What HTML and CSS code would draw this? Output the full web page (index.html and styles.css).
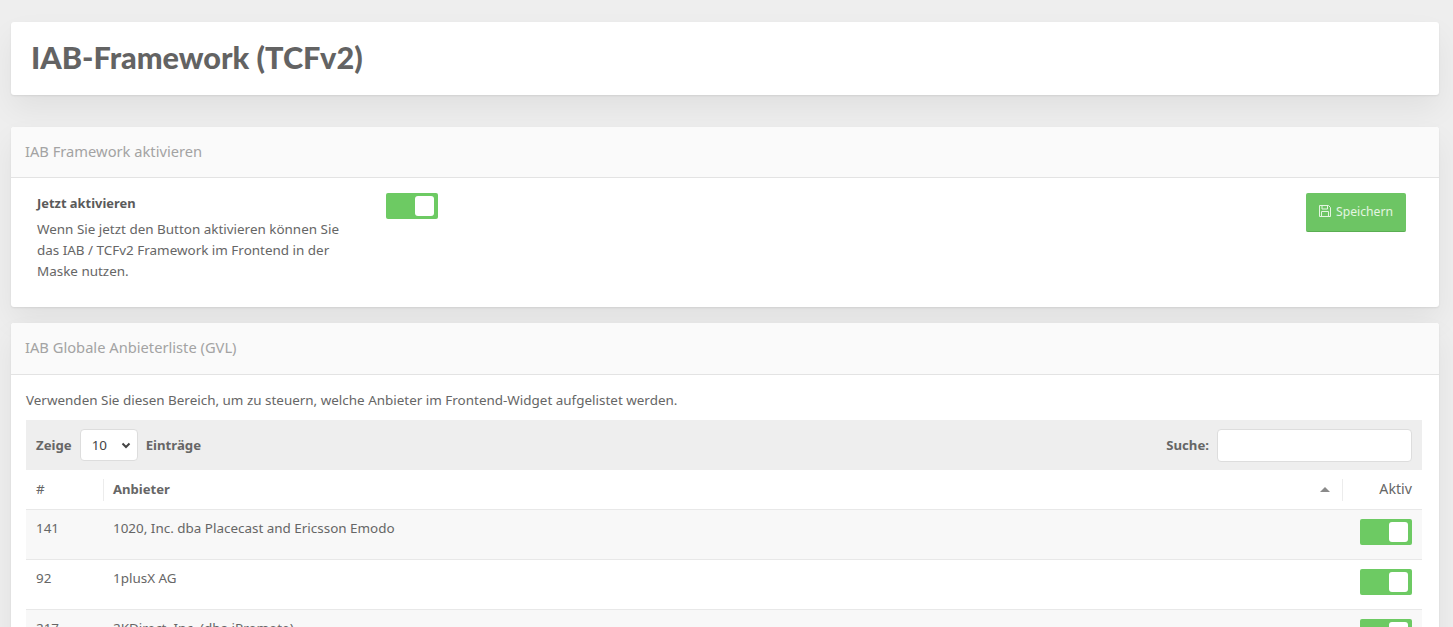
FILE: index.html
```html
<!DOCTYPE html>
<html lang="de">
<head>
    <meta charset="UTF-8">
    <meta name="viewport" content="width=device-width, initial-scale=1.0">
    <title>IAB-Framework (TCFv2)</title>
    <link rel="stylesheet" href="styles.css">
</head>
<body>
    <div class="page">
        <div class="card title-card">
            <h1>IAB-Framework (TCFv2)</h1>
        </div>

        <div class="card activate-card">
            <div class="card-header">IAB Framework aktivieren</div>
            <div class="activate-body">
                <div class="activate-text">
                    <strong>Jetzt aktivieren</strong>
                    <p>Wenn Sie jetzt den Button aktivieren können Sie das IAB / TCFv2 Framework im Frontend in der Maske nutzen.</p>
                </div>
                <span class="switch"><span class="knob"></span></span>
                <button class="save-btn">
                    <svg width="12" height="12" viewBox="0 0 12 12" fill="none" stroke="currentColor" stroke-width="1">
                        <path d="M.5.5h9l2 2v9H.5z"/>
                        <path d="M3 .5v3.5h5.5V.5"/>
                        <path d="M2.5 11.5V6.5h7v5"/>
                    </svg>
                    Speichern
                </button>
            </div>
        </div>

        <div class="card list-card">
            <div class="card-header list-header">IAB Globale Anbieterliste (GVL)</div>
            <div class="list-body">
                <p class="intro">Verwenden Sie diesen Bereich, um zu steuern, welche Anbieter im Frontend-Widget aufgelistet werden.</p>
                <div class="toolbar">
                    <label class="toolbar-group">Zeige
                        <span class="fake-select">10
                            <svg width="10" height="7" viewBox="0 0 10 7" fill="none" stroke="#444" stroke-width="2"><path d="M1.5 1.5 5 5l3.5-3.5"/></svg>
                        </span>
                        Einträge</label>
                    <label class="toolbar-group">Suche: <input type="text" class="search"></label>
                </div>
                <table class="vendors">
                    <thead>
                        <tr>
                            <th class="col-id"><span>#</span></th>
                            <th class="col-name"><span>Anbieter</span><i class="sort-up"></i></th>
                            <th class="col-active"><span>Aktiv</span></th>
                        </tr>
                    </thead>
                    <tbody>
                        <tr>
                            <td>141</td>
                            <td>1020, Inc. dba Placecast and Ericsson Emodo</td>
                            <td class="cell-switch"><span class="switch"><span class="knob"></span></span></td>
                        </tr>
                        <tr>
                            <td>92</td>
                            <td>1plusX AG</td>
                            <td class="cell-switch"><span class="switch"><span class="knob"></span></span></td>
                        </tr>
                        <tr>
                            <td>217</td>
                            <td>2KDirect, Inc. (dba iPromote)</td>
                            <td class="cell-switch"><span class="switch"><span class="knob"></span></span></td>
                        </tr>
                    </tbody>
                </table>
            </div>
        </div>
    </div>
</body>
</html>
```

FILE: styles.css
```css
html, body {
    height: 100%;
    overflow: hidden;
}
body {
    margin: 0;
    font-family: "Noto Sans", Arial, sans-serif;
    font-size: 13.45px;
    color: #666;
    background-color: #eeeeee;
}
.page {
    padding: 22px 14px 0 11px;
}
.card {
    background: #fff;
    border-radius: 3px;
    box-shadow: 0 1px 2px rgba(0, 0, 0, 0.08), 0 14px 30px rgba(0, 0, 0, 0.06);
}
.title-card {
    height: 73px;
    display: flex;
    align-items: center;
    padding: 0 0 2px 20px;
    box-sizing: border-box;
    margin-bottom: 32px;
}
h1 {
    margin: 0;
    font-family: "Lato", sans-serif;
    font-size: 30.65px;
    font-weight: 900;
    color: #636363;
}
.card-header {
    height: 50px;
    line-height: 48px;
    padding-left: 14px;
    font-size: 14.7px;
    color: #a3a3a3;
    background: #fafafa;
    border-bottom: 1px solid #e3e3e3;
    border-radius: 3px 3px 0 0;
}
.list-header {
    height: 51px;
}
.activate-card {
    margin-bottom: 16px;
}
.activate-body {
    display: flex;
    align-items: flex-start;
    height: 129px;
    padding: 15px 33px 0 26px;
    box-sizing: border-box;
}
.activate-text {
    width: 349px;
    padding-right: 40px;
    box-sizing: border-box;
    line-height: 21px;
}
.activate-text strong {
    font-size: 12.9px;
    color: #5a5a5a;
}
.activate-text p {
    margin: 5px 0 0;
}
.switch {
    display: inline-block;
    position: relative;
    width: 52px;
    height: 26px;
    border-radius: 2px;
    background: #6dca63;
}
.knob {
    position: absolute;
    top: 3px;
    right: 4px;
    width: 19px;
    height: 20px;
    border-radius: 3px;
    background: #fff;
}
.save-btn {
    margin-left: auto;
    display: flex;
    align-items: center;
    gap: 5px;
    width: 100px;
    height: 39px;
    justify-content: center;
    padding: 0 0 2px;
    font-family: inherit;
    font-size: 12.2px;
    color: #e4f5e1;
    background: #6dc564;
    border: none;
    border-bottom: 1px solid #5aae52;
    border-radius: 2px;
}
.list-body {
    padding: 15px 17px 0 15px;
}
.intro {
    margin: 0 0 10px;
    line-height: 20px;
}
.toolbar {
    display: flex;
    justify-content: space-between;
    align-items: center;
    height: 50px;
    padding: 0 10px;
    font-size: 13.2px;
    background: #eeeeee;
    font-weight: 700;
}
.toolbar-group {
    display: flex;
    align-items: center;
    gap: 8px;
}
.fake-select {
    display: flex;
    align-items: center;
    justify-content: space-between;
    width: 58px;
    height: 32px;
    padding: 0 6px 0 11px;
    box-sizing: border-box;
    font-size: 13.45px;
    font-weight: 400;
    color: #444;
    background: #fff;
    border: 1px solid #ddd;
    border-radius: 4px;
}
.search {
    width: 193px;
    height: 31px;
    padding: 0;
    box-sizing: content-box;
    background: #fff;
    border: 1px solid #ddd;
    border-radius: 4px;
}
.vendors {
    width: 100%;
    border-collapse: collapse;
    table-layout: fixed;
}
.vendors th {
    height: 39px;
    padding: 0 10px 1px;
    box-sizing: border-box;
    text-align: left;
    font-size: 13.1px;
    font-weight: 700;
    border-bottom: 1px solid #e8e8e8;
    position: relative;
}
.vendors td {
    height: 50px;
    padding: 9px 10px 0;
    box-sizing: border-box;
    vertical-align: top;
    line-height: 18px;
    border-bottom: 1px solid #e8e8e8;
}
.vendors tbody tr:nth-child(odd) {
    background: #f8f8f8;
}
.vendors .col-id {
    width: 77px;
    font-size: 13.45px;
    font-weight: 400;
}
.vendors .col-active {
    width: 80px;
    text-align: right;
    font-size: 14.2px;
    font-weight: 400;
}
.col-name::before, .col-active::before {
    content: "";
    position: absolute;
    left: 0;
    top: 9px;
    height: 22px;
    border-left: 1px solid #ececec;
}
.sort-up {
    position: absolute;
    right: 12px;
    top: 17px;
    border-left: 5px solid transparent;
    border-right: 5px solid transparent;
    border-bottom: 5px solid #8a8a8a;
}
.cell-switch {
    text-align: right;
}
```
